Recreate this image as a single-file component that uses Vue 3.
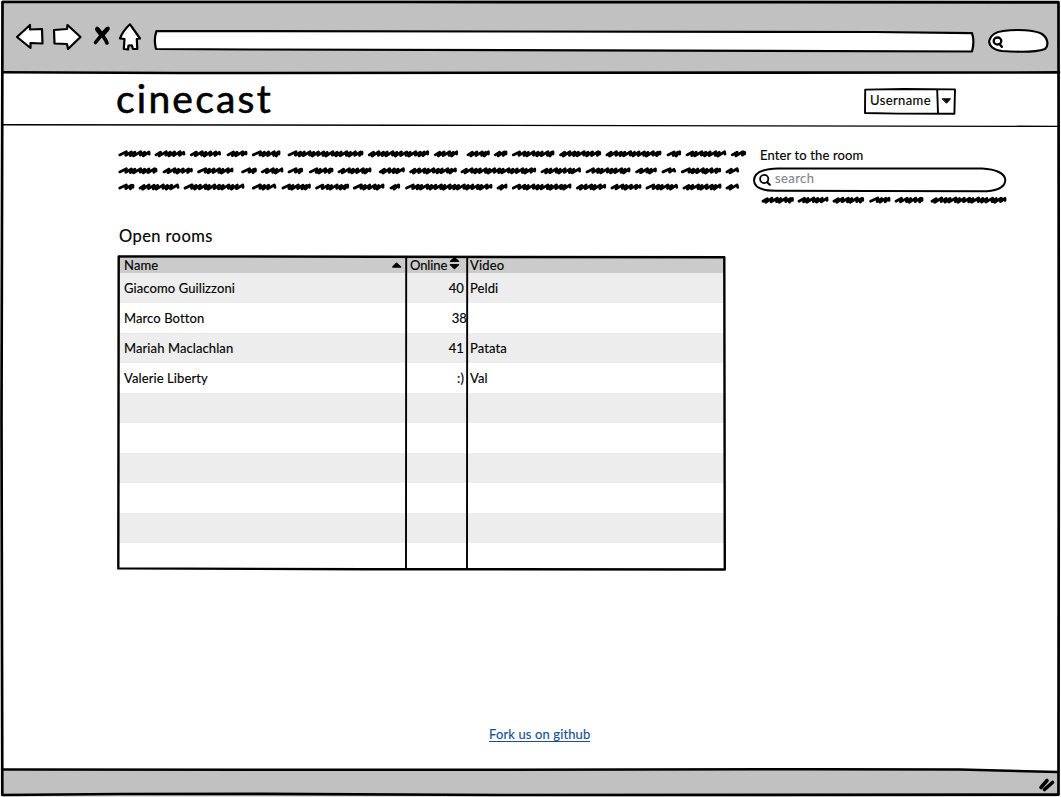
<script setup>
const paragraph = [
  { y: 13.7, words: [[118.5,150.5],[154.7,185.3],[190,221],[226.7,247.3],[252,280.3],[287.7,363.3],[368,429],[434,458],[466.7,489.7],[494,507.3],[512,554.3],[559.3,601],[605.7,661.3],[666.7,681],[685.7,726.3],[731,746]] },
  { y: 30.7, words: [[118.5,157.3],[162.7,192.7],[197.3,233.3],[241.3,256.7],[261,283.3],[287.7,303],[309,333.3],[337.7,371.3],[379,404.7],[409.3,456.7],[460.7,536],[540.7,581],[585.7,630.3],[635.3,656.7],[661.7,676],[681,721],[725.7,739]] },
  { y: 46.9, words: [[118.5,134.3],[138.7,179.3],[183.7,244.3],[252,276.3],[281.7,310.7],[315.3,349],[353,384.3],[389.7,400],[405.3,492.3],[496.7,507.3],[512,571.3],[576,606],[610.7,641.3],[645.7,678],[682.7,721.3],[725.7,739]] }
]
const note = [
  { y: 6, words: [[761.7,793.7],[797.7,828.3],[832.7,864],[869.3,890.3],[894.7,923.3],[930.7,1006.3]] }
]

// Turns word extents into slanted pen scribbles with uneven stroke spacing.
function scribble(lines, left) {
  let d = ''
  for (const { y, words } of lines) {
    for (const [a, b] of words) {
      const end = b - left - 1.3
      let x = a - left + 1.3
      let i = 0
      d += `M${x.toFixed(1)} ${(y + 1.2).toFixed(1)}`
      while (x < end) {
        const w = Math.sin((a + i * 1.7) * 2.3)
        const top = Math.min(end, x + 5.6 + w * 1.5)
        d += `L${top.toFixed(1)} ${(y - 1.7 - w * 0.3).toFixed(1)}`
        if (top >= end - 1) {
          d += `L${end.toFixed(1)} ${(y + 0.4).toFixed(1)}`
          break
        }
        x = top - 1 + w * 0.5
        d += `L${x.toFixed(1)} ${(y + 1.9 - w * 0.4).toFixed(1)}`
        i++
      }
    }
  }
  return d
}
const introPath = scribble(paragraph, 118)
const notePath = scribble(note, 753)

const rooms = [
  { name: 'Giacomo Guilizzoni', online: '40', video: 'Peldi' },
  { name: 'Marco Botton', online: '38', video: '', flush: true },
  { name: 'Mariah Maclachlan', online: '41', video: 'Patata' },
  { name: 'Valerie Liberty', online: ':)', video: 'Val' },
  {}, {}, {}, {}, {}, {}
]
</script>

<template>
  <div class="window">
    <div class="toolbar">
      <svg class="ink" width="1061" height="76">
        <g fill="#fff" stroke-width="2.2">
          <path d="M17 37 L30 25 L30 29.5 L42 29 L42.5 43.5 L30.5 43 L30.5 48 Z" />
          <path d="M54 30 L67 29 L67.5 25 L80.5 37 L68 49 L67 44 L54.5 43.5 Z" />
          <path d="M130 24.3 L140 38.5 L136.8 39 L137.3 49 L133 49 L131.8 45.3 L128.5 45.5 L128 49.5 L123.8 49 L124.5 39 L120 38.5 C122 33 126 28 130 24.3 Z" />
          <path d="M156.5 31 C154.2 37 154.5 43 156 49 L250 49.5 L972 51.5 C973.8 45 974 39 972 33.2 L875 32 Z" />
          <path d="M1003 31 C1017 29 1035 30 1042 34 C1048 38 1049 46 1045 49 C1034 53 1016 52 1002 51 C993 50 988 45 989.5 40 C991 34 996 32 1003 31 Z" />
        </g>
        <path d="M97 28.5 C101 33 105 38 107 43 M108 28.5 C103 33 99 38 95.5 42.5" fill="none" stroke-width="3.6" />
        <path d="M97.5 29.5 L101 34 M107 29.5 L103 34" stroke-width="4.6" />
        <ellipse cx="997.5" cy="41" rx="3.8" ry="3.5" fill="none" stroke-width="2.3" />
        <path d="M999.5 44 L1001.8 46.8" stroke-width="2.4" />
      </svg>
    </div>

    <header class="masthead">
      <h1>cinecast</h1>
      <button class="user">
        <svg class="ink" width="92" height="27">
          <path d="M1.2 1.6 L40 1 L91 1.4 L90.4 25.8 L34 25.6 L1 25 Z M73.2 1.6 L74 25.5" fill="none" stroke-width="1.9" />
          <path d="M78.5 10.8 L86.5 10.8 L82.7 15 Z" stroke-width="1" />
        </svg>
        <span>Username</span>
      </button>
      <svg class="ink rule" width="1061" height="5">
        <path d="M3 0.7 L400 1.2 L1059 2.4" fill="none" stroke-width="1.4" />
      </svg>
    </header>

    <main>
      <section class="left">
        <svg class="scribble" width="630" height="64"><path :d="introPath" /></svg>
        <h2>Open rooms</h2>
        <div class="table">
          <div class="row head">
            <span class="name">Name</span>
            <span class="online">Online</span>
            <span class="video">Video</span>
          </div>
          <div v-for="(r, i) in rooms" :key="i" class="row">
            <span class="name">{{ r.name }}</span>
            <span class="online" :class="{ flush: r.flush }">{{ r.online }}</span>
            <span class="video">{{ r.video }}</span>
          </div>
          <svg class="ink" width="609" height="318">
            <g fill="none" stroke-width="2.4">
              <path d="M1.7 1.5 L120 1.5 L607.3 2.3 L607.8 314.5 L250 314.2 L1.3 313.4 Z" />
              <path d="M289.2 3 L289 314 M350.2 3 L350 314" stroke-width="1.9" />
            </g>
            <path d="M275.8 12 L279.5 8.2 L283.5 12 Z M333.5 6.2 L337.5 2.8 L341.5 6.2 Z M333.5 9.7 L341.5 9.7 L337.5 13.5 Z" stroke-width="1.5" />
          </svg>
        </div>
      </section>

      <aside>
        <label>Enter to the room</label>
        <div class="search">
          <svg class="ink" width="254" height="27">
            <path d="M25 1.4 L130 1.4 L229 1.4 C243 2 252 6.5 252.3 13 C252.3 19 246 23.6 234 24.2 L120 24.1 L22 23.8 C8 23.6 1.2 20 1 13.5 C1 6 10 1.8 25 1.4 Z" fill="#fff" stroke-width="2" />
            <circle cx="11.2" cy="12" r="4.1" fill="none" stroke-width="1.8" />
            <path d="M14.2 15.3 L16.8 17.7" stroke-width="2.2" />
          </svg>
          <span>search</span>
        </div>
        <svg class="scribble" width="256" height="14"><path :d="notePath" /></svg>
      </aside>
    </main>

    <div class="link"><a>Fork us on github</a></div>

    <footer class="status">
      <svg class="ink" width="1061" height="29">
        <path d="M2.5 2.2 L400 1.8 L800 1 L960 2 L1058 4.3 L1058 28.5 L2.5 28.5 Z" fill="#c1c1c1" stroke="none" />
        <path d="M2.5 1.4 L400 1.8 L800 1.2 L960 1.6 L1058 4.1" fill="none" stroke-width="2.5" />
        <path d="M1041 19.5 L1047 12.5 M1044.5 21.5 L1052.5 14.5" stroke-width="3.6" />
      </svg>
    </footer>

    <svg class="ink frame" width="1061" height="797">
      <g fill="none">
        <path d="M2.5 2 L400 2 L1058.5 2.3 L1058.8 400 L1058.5 794.6 L500 795 L260 793.8 L120 794 L2.3 795 L1.5 420 Z" stroke-width="2.7" />
        <path d="M2.5 72.3 L180 73 L1059 72.4" stroke-width="2.6" />
      </g>
    </svg>
  </div>
</template>

<style>
body { margin: 0; background: #fff; overflow: hidden; }
</style>

<style scoped>
* { box-sizing: border-box; }
.window {
  position: relative; width: 1061px; height: 797px; overflow: hidden;
  display: flex; flex-direction: column; background: #fff; color: #000;
  font: 13px/16px Lato, "Liberation Sans", sans-serif;
  -webkit-text-stroke: 0.15px;
}
.ink { position: absolute; left: 0; top: 0; display: block; stroke: #000; stroke-linecap: round; stroke-linejoin: round; pointer-events: none; }
.toolbar { position: relative; height: 73px; background: #c1c1c1; flex: none; margin: 0 2px; }
.toolbar .ink { left: -2px; }
.masthead { position: relative; height: 52px; flex: none; display: flex; justify-content: space-between; padding: 0 105px 0 116px; }
.masthead h1 { margin: 0; font-weight: 400; font-size: 39px; line-height: 51px; letter-spacing: 2.2px; -webkit-text-stroke: 0.6px; }
.user { position: relative; width: 92px; height: 27px; margin: 15px 0 0; padding: 0 0 3px 6px; background: none; border: 0; font: inherit; line-height: 24px; color: inherit; text-align: left; letter-spacing: 0.4px; }
.rule { top: 51px; }
main { display: flex; flex: none; height: 590px; padding: 15px 0 0 118px; }
.left { width: 635px; }
.scribble { display: block; fill: none; stroke: #000; stroke-width: 2.8; stroke-linejoin: round; stroke-linecap: round; }
h2 { margin: 22px 0 0 1px; font-weight: 400; font-size: 16.5px; line-height: 20px; letter-spacing: 0.42px; }
.table { position: relative; width: 609px; height: 317px; margin-top: 9px; margin-left: -1px; padding: 3px 2px; overflow: hidden; }
.row { display: flex; height: 30px; line-height: 30px; letter-spacing: 0.1px; }
.row:nth-child(even) { background: #ededed; }
.row.head { height: 15px; line-height: 15px; background: #cbcbcb; letter-spacing: 0.15px; }
.name { width: 287px; padding-left: 5px; }
.online { width: 61px; padding-right: 3px; text-align: right; }
.online.flush { padding-right: 0; }
.head .online { text-align: left; padding-left: 4px; letter-spacing: -0.1px; }
.video { padding-left: 3px; }
aside { width: 256px; padding-top: 7px; }
aside label { display: block; margin-left: 7px; letter-spacing: 0.13px; }
.search { position: relative; height: 27px; margin-top: 4px; padding-left: 22px; line-height: 22px; }
.search span { position: relative; color: #85858c; letter-spacing: 0.4px; }
.link { height: 53px; flex: none; padding: 11px 0 0 489px; color: #1b4f91; letter-spacing: 0.12px; }
.link a { display: inline-block; height: 15px; border-bottom: 1px solid #1b4f91; line-height: 15px; }
.status { position: relative; height: 29px; flex: none; }
</style>
